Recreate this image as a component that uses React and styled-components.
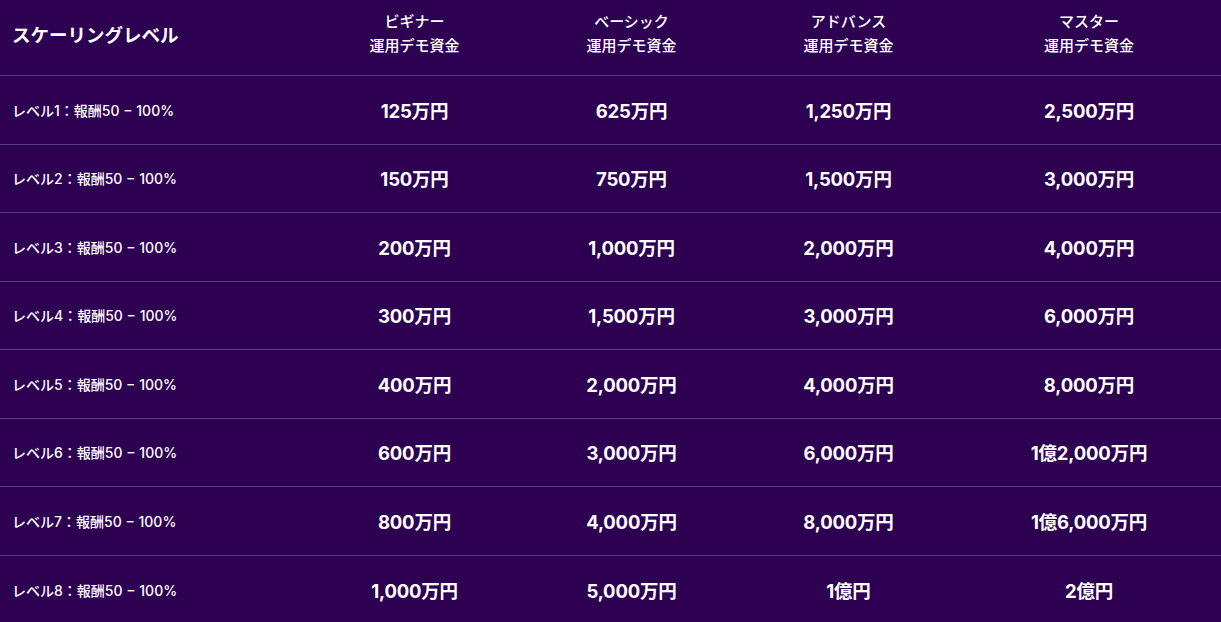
import React from "react";
import styled, { createGlobalStyle } from "styled-components";

const GlobalStyle = createGlobalStyle`
	html, body {
		margin: 0;
		padding: 0;
		background: #2d0052;
	}
	body {
		font-family: Inter, "Noto Sans CJK JP", sans-serif;
		color: #fff;
	}
`;

const Table = styled.div`
	display: grid;
	grid-template-columns: 306px 217px 217px 217px 1fr;
	width: 1221px;
	background: #2d0052;
`;

const Cell = styled.div`
	display: flex;
	align-items: center;
	justify-content: ${p => (p.$left ? "flex-start" : "center")};
	text-align: ${p => (p.$left ? "left" : "center")};
	padding-left: ${p => (p.$left ? "12px" : "0")};
	height: ${p => (p.$head ? "76px" : "68.5px")};
	box-sizing: border-box;
	border-bottom: ${p => (p.$last ? "none" : "1px solid #5b3f82")};
`;

const Title = styled.div`
	font-size: 18.5px;
	font-weight: 700;
	margin-top: -8px;
`;

const ColHead = styled.div`
	font-size: 15px;
	font-weight: 500;
	line-height: 24px;
	margin-top: -8px;
`;

const Label = styled.div`
	font-size: 14px;
	font-weight: 500;
	white-space: pre;
`;

const Value = styled.div`
	font-size: 18.5px;
	font-weight: 700;
	letter-spacing: -0.2px;
`;

const plans = ["ビギナー", "ベーシック", "アドバンス", "マスター"];

const rows = [
	["125万円", "625万円", "1,250万円", "2,500万円"],
	["150万円", "750万円", "1,500万円", "3,000万円"],
	["200万円", "1,000万円", "2,000万円", "4,000万円"],
	["300万円", "1,500万円", "3,000万円", "6,000万円"],
	["400万円", "2,000万円", "4,000万円", "8,000万円"],
	["600万円", "3,000万円", "6,000万円", "1億2,000万円"],
	["800万円", "4,000万円", "8,000万円", "1億6,000万円"],
	["1,000万円", "5,000万円", "1億円", "2億円"],
];

export default function App() {
	return (
		<>
			<GlobalStyle />
			<Table>
				<Cell $head $left>
					<Title>スケーリングレベル</Title>
				</Cell>
				{plans.map(p => (
					<Cell $head key={p}>
						<ColHead>
							{p}
							<br />
							運用デモ資金
						</ColHead>
					</Cell>
				))}
				{rows.map((r, i) => {
					const last = i === rows.length - 1;
					return (
						<React.Fragment key={i}>
							<Cell $left $last={last}>
								<Label>レベル{i + 1}：報酬50 − 100%</Label>
							</Cell>
							{r.map((v, j) => (
								<Cell $last={last} key={j}>
									<Value>{v}</Value>
								</Cell>
							))}
						</React.Fragment>
					);
				})}
			</Table>
		</>
	);
}
